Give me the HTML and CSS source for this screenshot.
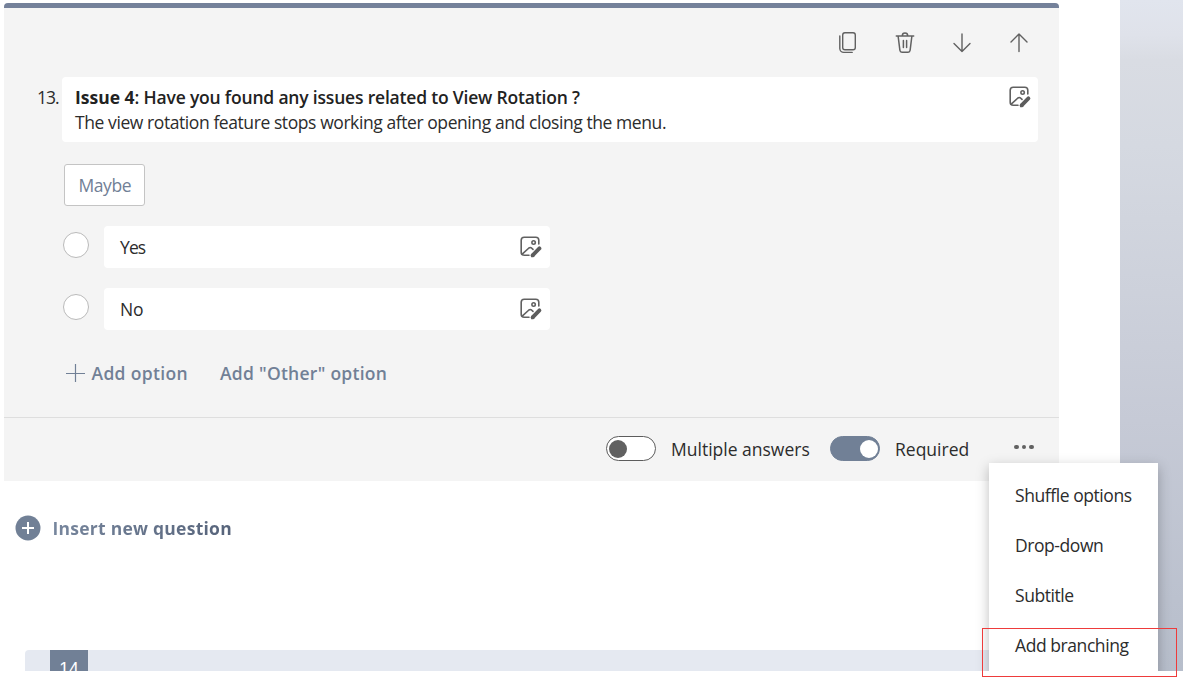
FILE: index.html
```html
<!DOCTYPE html>
<html lang="en">
<head>
<meta charset="utf-8">
<title>Form editor</title>
<link rel="stylesheet" href="styles.css">
</head>
<body>
<svg class="defs" width="0" height="0">
  <symbol id="picture" viewBox="0 0 24 24">
    <g fill="none" stroke="#616161" stroke-width="1.6" stroke-linecap="round" stroke-linejoin="round">
      <path d="M10 20.3H5.2A3 3 0 0 1 2.2 17.300V5.200a3 3 0 0 1 3-3H16.800a3 3 0 0 1 3 3V9"/>
      <path d="M3.200 19.200 9.900 13Q11.200 12 12.500 13L14 14.400"/>
      <circle cx="14.600" cy="7.500" r="1.700"/>
    </g>
    <path d="M13.600 20.300 20.400 13.400" stroke="#5c5c5c" stroke-width="3.900" stroke-linecap="round"/>
    <path d="M12 22.300 12.700 18.600 15.700 21.500Z" fill="#5c5c5c"/>
  </symbol>
</svg>
<div class="screen">
  <div class="capture">
    <main class="main">
      <section class="card">
        <div class="accent"></div>
        <div class="card-body">
          <div class="tools">
            <svg width="24" height="24" viewBox="0 0 24 24" fill="none" stroke="#616161" stroke-width="1.400" stroke-linecap="round"><rect x="6.700" y="1.700" width="12.600" height="17" rx="2.200"/><path d="M3.800 5V17.500A4 4 0 0 0 7.800 21.400H16.200"/></svg>
            <svg width="24" height="24" viewBox="0 0 24 24" fill="none" stroke="#616161" stroke-width="1.500" stroke-linecap="round" stroke-linejoin="round"><path d="M3.300 5H20.700M5.100 5 6.900 19.300A2.200 2.200 0 0 0 9 21.300H15A2.200 2.200 0 0 0 17.100 19.300L18.900 5M9.300 4.700A2.700 2.700 0 0 1 14.700 4.700M10.400 9.500V16.500M13.600 9.500V16.500"/></svg>
            <svg width="24" height="24" viewBox="0 0 24 24" fill="none" stroke="#616161" stroke-width="1.400" stroke-linecap="round" stroke-linejoin="round"><path d="M12 3V20.500M4 12.500 12 20.500 20 12.500"/></svg>
            <svg width="24" height="24" viewBox="0 0 24 24" fill="none" stroke="#616161" stroke-width="1.400" stroke-linecap="round" stroke-linejoin="round"><path d="M12 20.500V3M4 11 12 3 20 11"/></svg>
          </div>
          <div class="question">
            <div class="number">13.</div>
            <div class="question-box">
              <div>
                <div class="title"><b>Issue 4</b>: Have you found any issues related to View Rotation ?</div>
                <div class="subtitle">The view rotation feature stops working after opening and closing the menu.</div>
              </div>
              <svg class="picture" width="24" height="24"><use href="#picture"/></svg>
            </div>
          </div>
          <div class="answers">
            <button class="suggestion"><span>Maybe</span></button>
            <div class="option"><i class="radio"></i><div class="field"><span class="yes">Yes</span><svg width="24" height="24"><use href="#picture"/></svg></div></div>
            <div class="option"><i class="radio"></i><div class="field"><span class="no">No</span><svg width="24" height="24"><use href="#picture"/></svg></div></div>
            <div class="links">
              <svg width="20" height="20" viewBox="0 0 20 20" stroke="#718096" stroke-width="1.200"><path d="M0 10.500H19M9.500 1V19"/></svg>
              <span class="add">Add option</span>
              <span class="other">Add "Other" option</span>
            </div>
          </div>
        </div>
        <footer class="card-footer">
          <span class="toggle"></span><span class="label multiple">Multiple answers</span>
          <span class="toggle on"></span><span class="label required">Required</span>
          <span class="more"><i></i><i></i><i></i></span>
        </footer>
      </section>
      <div class="insert">
        <svg width="26" height="26" viewBox="0 0 26 26"><circle cx="13" cy="13" r="12.500" fill="#718096"/><path d="M7 13H19M13 7V19" stroke="#fff" stroke-width="2"/></svg>
        <span>Insert new question</span>
      </div>
      <div class="next"><span class="next-number">14</span></div>
    </main>
    <div class="backdrop"></div>
    <div class="menu">
      <span class="shuffle">Shuffle options</span><span class="drop">Drop-down</span><span class="sub">Subtitle</span><span class="branch">Add branching</span>
    </div>
  </div>
  <div class="highlight"></div>
</div>
</body>
</html>
```
FILE: styles.css
```css
* { box-sizing: border-box; }
body { margin: 0; background: #fff; color: #2c2c2c; font: 17.5px/24px "Open Sans", "Noto Sans", sans-serif; }
svg { display: block; flex: none; }
span { white-space: nowrap; }
.defs { position: absolute; }
.screen { position: relative; width: 1183px; height: 678px; overflow: hidden; }
.capture { position: relative; display: flex; height: 671px; overflow: hidden; }
.main { width: 1120px; padding: 3px 0 0 4px; }
.backdrop { flex: 1; background: linear-gradient(#e1e5ee 0, #dfe2ea 35px, #d9dce3 60px, #d5d9e1 145px, #c6cad6 420px, #bbc1ce 600px, #b7becb 671px); }

.card { width: 1055px; height: 478px; background: #f4f4f4; border-radius: 4px 4px 0 0; }
.accent { height: 5px; background: #74819a; border-radius: 4px 4px 0 0; }
.card-body { height: 409px; padding-top: 23px; }
.tools { display: flex; justify-content: flex-end; gap: 33px; padding-right: 28.5px; }
.question { display: flex; margin-top: 22px; }
.number { width: 58px; padding: 8px 0 0 33px; font-weight: 500; letter-spacing: -1px; }
.question-box { display: flex; justify-content: space-between; width: 976px; height: 65px; padding: 8px 6px 0 13px; background: #fff; border-radius: 4px; white-space: nowrap; }
.title { line-height: 25px; font-weight: 600; letter-spacing: -.19px; color: #222; }
.title b { font-weight: 700; letter-spacing: 0; }
.subtitle { line-height: 25px; letter-spacing: -.42px; }

.answers { padding: 22px 0 0 60px; }
.suggestion { display: block; width: 81px; height: 42px; padding: 0 0 0 13.5px; border: 1px solid #c4c4c4; border-radius: 3px; background: #fff; color: #718096; font: inherit; text-align: left; letter-spacing: -.45px; }
.option { display: flex; gap: 16px; margin-top: 20px; }
.radio { flex: none; width: 26px; height: 26px; margin: 6px 0 0 -1px; border: 1px solid #bababa; border-radius: 50%; background: #fff; }
.option .field { display: flex; align-items: center; justify-content: space-between; width: 446px; height: 42px; margin-left: -1px; padding: 0 7px 0 16px; border-radius: 4px; background: #fff; }
.field .yes { letter-spacing: -.9px; }
.field .no { letter-spacing: -.3px; }
.links { display: flex; align-items: center; margin: 31px 0 0 2px; color: #718096; font-weight: 600; }
.add { width: 128px; margin-left: 5.5px; letter-spacing: .33px; }
.links .add + .other { margin-left: .5px; letter-spacing: .27px; }

.card-footer { display: flex; align-items: center; height: 64px; padding: 0 0 2px 602px; border-top: 1px solid #dedede; }
.toggle { display: flex; align-items: center; width: 50px; height: 25px; padding-left: 2px; border: 1px solid #5c5c5c; border-radius: 13px; background: #fff; }
.toggle::before { content: ""; width: 18px; height: 18px; border-radius: 50%; background: #616161; }
.toggle.on { padding-left: 29px; border-color: #718096; background: #718096; }
.toggle.on::before { background: #fff; }
.label { margin-left: 15px; }
.multiple { width: 159px; }
.required { width: 104px; }
.more { display: flex; gap: 3px; padding: 0 0 3px 15px; }
.more i { width: 4.500px; height: 4.500px; border-radius: 50%; background: #616161; }

.insert { display: flex; align-items: center; gap: 11.5px; height: 26px; margin: 34px 0 0 11px; font-weight: 700; }
.insert span { background: linear-gradient(90deg, #77869d, #56637a); background-clip: text; color: transparent; letter-spacing: .25px; }
.next { height: 22px; margin: 109px 0 0 21px; padding-left: 25px; border-radius: 4px 0 0; background: #e5e9f1; }
.next-number { display: block; width: 38px; height: 22px; padding-top: 7px; background: #718096; color: #fff; text-align: center; font-family: "Liberation Sans", sans-serif; }

.menu { position: absolute; left: 989px; top: 463px; width: 169px; height: 230px; padding: 7px 0 0 26px; display: flex; flex-direction: column; background: #fff; box-shadow: 0 4px 12px rgba(0,0,0,.26); }
.menu span { height: 50px; line-height: 50px; letter-spacing: -.43px; }
.highlight { position: absolute; left: 982px; top: 628px; width: 195px; height: 49px; border: 1px solid #ee3b3b; }
```
